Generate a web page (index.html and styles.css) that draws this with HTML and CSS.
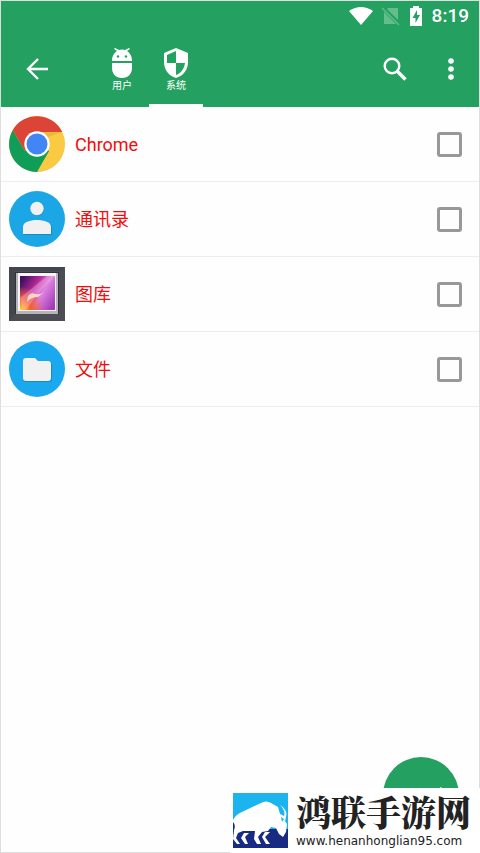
FILE: index.html
```html
<!DOCTYPE html>
<html lang="zh-CN">
<head>
<meta charset="utf-8">
<meta name="viewport" content="width=device-width, initial-scale=1">
<title>系统</title>
<link rel="stylesheet" href="styles.css">
</head>
<body>
<div class="screen">
  <header class="header">
    <div class="status">
      <svg width="24" height="20" viewBox="0 0 24 20" fill="#fff"><path d="M0 5Q12-3 24 5L12 19Z"/></svg>
      <svg width="18" height="20" viewBox="0 0 18 20"><path d="M6 2H16V14L5 3ZM2 6L14 18H2Z" fill="#63bd8c"/><path d="M0 2L17 19" stroke="#63bd8c" stroke-width="1.5"/></svg>
      <svg width="14" height="20" viewBox="0 0 14 20"><path d="M4 0H10V2H13V20H1V2H4Z" fill="#fff"/><path d="M8 4L3.500 12H6.500V17L11 9H8Z" fill="#24a160"/></svg>
      <span class="clock">8:19</span>
    </div>
    <div class="toolbar">
      <button class="icon-button" aria-label="返回"><svg width="24" height="24" viewBox="0 0 24 24" fill="none" stroke="#fff" stroke-width="2.4"><path d="M23 12H3M13 2L3 12L13 22"/></svg></button>
      <nav class="tabs">
        <a class="tab" href="#user">
          <svg width="22" height="30" viewBox="0 0 22 30"><path d="M1 13C1 8 3 5 6 3L3 1L4 0L8 2Q11 1 14 2L18 0L19 1L16 3C19 5 21 8 21 13ZM1 15H21V20C21 26 17 30 11 30S1 26 1 20Z" fill="#fff"/><circle cx="7" cy="8.500" r="1.200" fill="#24a160"/><circle cx="15" cy="8.500" r="1.200" fill="#24a160"/></svg>
          <span>用户</span>
        </a>
        <a class="tab tab-active" href="#system">
          <svg width="26" height="30" viewBox="0 0 26 30"><path d="M13 0L25 5V14C25 22 20 28 13 30C6 28 1 22 1 14V5Z" fill="#fff"/><path d="M13 3V15H4V7ZM13 15H22C21 21 18 25 13 27Z" fill="#24a160"/></svg>
          <span>系统</span>
        </a>
      </nav>
      <button class="icon-button search" aria-label="搜索"><svg width="24" height="24" viewBox="0 0 24 24" fill="none" stroke="#fff"><circle cx="9" cy="9" r="7.300" stroke-width="2.400"/><path d="M14.500 14.500L22.500 22.500" stroke-width="3.300"/></svg></button>
      <button class="icon-button more" aria-label="更多"><svg width="6" height="22" viewBox="0 0 6 22" fill="#fff"><circle cx="3" cy="3" r="2.800"/><circle cx="3" cy="11" r="2.800"/><circle cx="3" cy="19" r="2.800"/></svg></button>
    </div>
  </header>
  <main class="list">
    <label class="row">
      <svg class="app-icon" viewBox="0 0 56 56"><circle cx="28" cy="28.500" r="27.500" fill="#ccc"/><circle cx="28" cy="28" r="28" fill="#fbca43"/><path d="M28 28L40.100 35L28 56A28 28 0 0 1 3.800 14L15.900 35Z" fill="#0f9d58"/><path d="M3.800 14A28 28 0 0 1 53.200 16H28V28L15.900 35Z" fill="#db4437"/><path d="M28 16H53L39 21Z" fill="#eab83a"/><circle cx="28" cy="28" r="12.700" fill="#fff"/><circle cx="28" cy="28" r="10.500" fill="#4285f4"/></svg>
      <span class="name">Chrome</span>
      <input class="check" type="checkbox">
    </label>
    <label class="row">
      <svg class="app-icon" viewBox="0 0 56 56"><circle cx="28" cy="28" r="28" fill="#1ba7e5"/><g fill="#168bc2"><circle cx="28.500" cy="18" r="6.700"/><path d="M14 44V37C14 32 21 30 28 30S43 32 43 37V44Z"/></g><g fill="#f1f1f1"><circle cx="28" cy="17.500" r="6.700"/><path d="M14 43V36C14 31 21 29 28 29S42 31 42 36V43Z"/></g></svg>
      <span class="name">通讯录</span>
      <input class="check" type="checkbox">
    </label>
    <label class="row">
      <svg class="app-icon" viewBox="0 0 56 56"><defs><linearGradient id="photo" x1="0" y1="0.200" x2="1" y2="0.800"><stop offset="0" stop-color="#40105f"/><stop offset="0.350" stop-color="#b42898"/><stop offset="0.600" stop-color="#de83e3"/><stop offset="1" stop-color="#a43cb7"/></linearGradient><radialGradient id="glow" cx="0" cy="1" r="0.700"><stop offset="0" stop-color="#ffdc20"/><stop offset="0.450" stop-color="#f4602c"/><stop offset="1" stop-color="#f4602c" stop-opacity="0"/></radialGradient></defs><path d="M0 1H56V55H0Z" fill="#4b4c54"/><path d="M0 1H56L51 5H5ZM0 1L7 7V47L0 55Z" fill="#44464e"/><path d="M6 6H50V48H6Z" fill="#33343b"/><path d="M7 7H49V48H7Z" fill="#b4b4b9"/><path d="M9 7H47V45H9Z" fill="#f6f4f7"/><path d="M11 10H46V44H11Z" fill="url(#photo)"/><path d="M11 10H46V44H11Z" fill="url(#glow)"/><path d="M11 32L38 10H46L27 30L17 44H14Z" fill="#ffc7ef" opacity="0.350"/><path d="M19 30Q22 26 26 28Q31 29 35 26L29 31Q22 31 18 36Z" fill="#fff0cc" opacity="0.800"/></svg>
      <span class="name">图库</span>
      <input class="check" type="checkbox">
    </label>
    <label class="row">
      <svg class="app-icon" viewBox="0 0 56 56"><circle cx="28" cy="28" r="28" fill="#1aa8ee"/><path d="M17 18H26L29 21H40Q43 21 43 24V38Q43 41 40 41H17Q14 41 14 38V21Q14 18 17 18Z" fill="#158cc8"/><path d="M17 17H26L29 20H39Q42 20 42 23V37Q42 40 39 40H17Q14 40 14 37V20Q14 17 17 17Z" fill="#f1f1f1"/></svg>
      <span class="name">文件</span>
      <input class="check" type="checkbox">
    </label>
  </main>
  <button class="fab" aria-label="确定"><svg width="30" height="20" viewBox="0 0 30 20" fill="none" stroke="#fff" stroke-width="3"><path d="M4 9L12 17L26 3"/></svg></button>
  <footer class="site">
    <svg class="site-logo" viewBox="0 0 55 55"><path d="M0 0H55V55H0Z" fill="#1cb4ee"/><path d="M0 36H55V55H0Z" fill="#182b83"/><path d="M0 27Q3 21 11 18L28 10Q33 7 38 10L45 14L47 21L51 23Q53 18 47 12Q55 17 53 24L52 28L54 31L53 39L50 44L46 41L43 35L38 34L35 38L29 39L25 44L28 51H24L21 46L22 38H10L5 40L3 45L7 51H4L0 46L1 36L0 34Z" fill="#fff"/><path d="M0 29Q3 32 1 37L0 41Z" fill="#182b83"/><path d="M32 39H37L32 44L37 51H33L29 44ZM11 40H16L12 44L15 51H12L8 45Z" fill="#fff"/><path d="M48 24L51 26L49 29Z" fill="#1cb4ee"/></svg>
    <div class="site-text">
      <strong class="site-name">鸿联手游网</strong>
      <a class="site-url" href="#site">www.henanhonglian95.com</a>
    </div>
  </footer>
</div>
</body>
</html>
```
FILE: styles.css
```css
* {
  box-sizing: border-box;
}

body {
  margin: 0;
  background: #fefefe;
  font-family: Roboto, "Noto Sans CJK SC", sans-serif;
}

button {
  border: 0;
  padding: 0;
  background: none;
}

svg {
  display: block;
  flex: none;
}

.screen {
  position: relative;
  display: flex;
  flex-direction: column;
  min-height: 100vh;
  border: 1px solid #dedede;
}

.header {
  background: #24a160;
  color: #fff;
}

.status {
  display: flex;
  align-items: center;
  justify-content: flex-end;
  gap: 9px;
  height: 30px;
  padding-right: 10px;
}

.clock {
  font-size: 19px;
  font-weight: 500;
  line-height: 24px;
}

.toolbar {
  display: flex;
  align-items: center;
  height: 76px;
  padding-left: 8px;
}

.icon-button {
  display: flex;
  align-items: center;
  justify-content: center;
  width: 56px;
  height: 56px;
}

.tabs {
  display: flex;
  align-self: stretch;
  margin-left: 30px;
}

.tab {
  display: flex;
  flex-direction: column;
  align-items: center;
  gap: 1px;
  width: 54px;
  padding-top: 17px;
  border-bottom: 3px solid transparent;
  color: #fff;
  font-size: 10px;
  line-height: 14px;
  text-decoration: none;
}

.tab-active {
  border-color: #fff;
}

.search {
  margin-left: auto;
}

.row {
  display: flex;
  align-items: center;
  gap: 10px;
  height: 75px;
  padding: 0 17px 0 8px;
  border-bottom: 1px solid #ededed;
}

.app-icon {
  width: 56px;
  height: 56px;
}

.name {
  flex: 1;
  padding-top: 2px;
  color: #f20c0c;
  font-size: 18px;
  line-height: 24px;
}

.check {
  appearance: none;
  width: 25px;
  height: 25px;
  margin: 0;
  border: 3px solid #989898;
  border-radius: 3px;
}

.fab {
  position: absolute;
  right: 20px;
  bottom: 19px;
  display: flex;
  align-items: center;
  justify-content: center;
  width: 76px;
  height: 76px;
  padding-left: 20px;
  border-radius: 50%;
  background: #24a160;
}

.site {
  position: absolute;
  right: -1px;
  bottom: -1px;
  display: flex;
  gap: 8px;
  width: 250px;
  height: 65px;
  padding: 5px 3px;
  background: #fff;
}

.site-logo {
  width: 55px;
  height: 55px;
}

.site-text {
  display: flex;
  flex-direction: column;
  color: #222;
}

.site-name {
  font-family: "Noto Serif CJK SC", "Noto Sans CJK SC", serif;
  font-size: 35px;
  font-weight: 900;
  line-height: 36px;
}

.site-url {
  padding-top: 5px;
  color: #222;
  font-family: "DejaVu Sans", sans-serif;
  font-size: 12px;
  line-height: 14px;
  text-decoration: none;
}
```
